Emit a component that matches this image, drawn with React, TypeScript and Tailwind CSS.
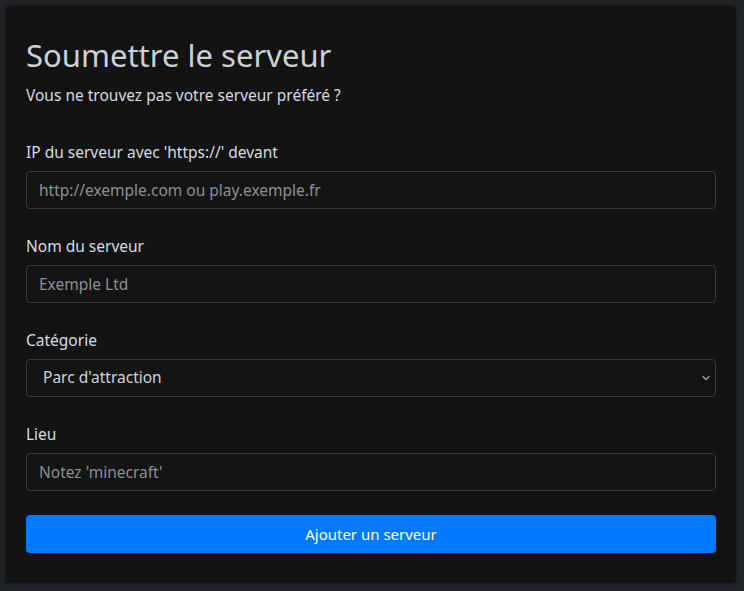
import { ChevronDown } from 'lucide-react';

const fields = [
	{ label: "IP du serveur avec 'https://' devant", placeholder: 'http://exemple.com ou play.exemple.fr' },
	{ label: 'Nom du serveur', placeholder: 'Exemple Ltd' }
];

export default function App() {
	return (
		<div
			className="min-h-[591px] w-full bg-[#202327] p-[6px] pr-[8px]"
			style={{ fontFamily: '"Noto Sans", "Open Sans", sans-serif' }}
		>
			<div className="rounded-[3px] bg-[#131313] px-5 pt-[30px] pb-[30px] shadow-[0_0_4px_rgba(0,0,0,0.4)]">
				<h1 className="text-[31px] leading-[38px] text-[#c9d1db]">Soumettre le serveur</h1>
				<p className="mt-[10px] text-[15.5px] leading-[22px] text-[#d3dae2]">Vous ne trouvez pas votre serveur préféré ?</p>

				<form className="mt-[35px] flex flex-col gap-[26px]">
					{fields.map((f) => (
						<div key={f.label}>
							<label className="block text-[15.5px] leading-[22px] text-[#d6dbe0]">{f.label}</label>
							<input
								type="text"
								placeholder={f.placeholder}
								className="mt-[8px] h-[38px] w-full rounded-[4px] border border-[#3a3a3a] bg-[#141414] px-3 text-[15.5px] text-[#cfd4da] placeholder:text-[#8c9094] outline-none"
							/>
						</div>
					))}
					<div>
						<label className="block text-[15.5px] leading-[22px] text-[#d6dbe0]">Catégorie</label>
						<div className="relative mt-[8px]">
							<select className="h-[38px] w-full appearance-none rounded-[4px] border border-[#3a3a3a] bg-[#141414] pl-[16px] text-[15.5px] text-[#cfd4da] outline-none">
								<option>Parc d'attraction</option>
							</select>
							<ChevronDown
								className="pointer-events-none absolute right-[4px] top-[13px] h-[12px] w-[12px] text-[#9a9a9a]"
								strokeWidth={3}
							/>
						</div>
					</div>
					<div>
						<label className="block text-[15.5px] leading-[22px] text-[#d6dbe0]">Lieu</label>
						<input
							type="text"
							placeholder="Notez 'minecraft'"
							className="mt-[8px] h-[38px] w-full rounded-[4px] border border-[#3a3a3a] bg-[#141414] px-3 text-[15.5px] text-[#cfd4da] placeholder:text-[#8c9094] outline-none"
						/>
					</div>
				</form>

				<button
					type="button"
					className="mt-[24px] h-[38px] w-full rounded-[4px] bg-[#007bff] text-[15px] text-white"
				>
					Ajouter un serveur
				</button>
			</div>
		</div>
	);
}
